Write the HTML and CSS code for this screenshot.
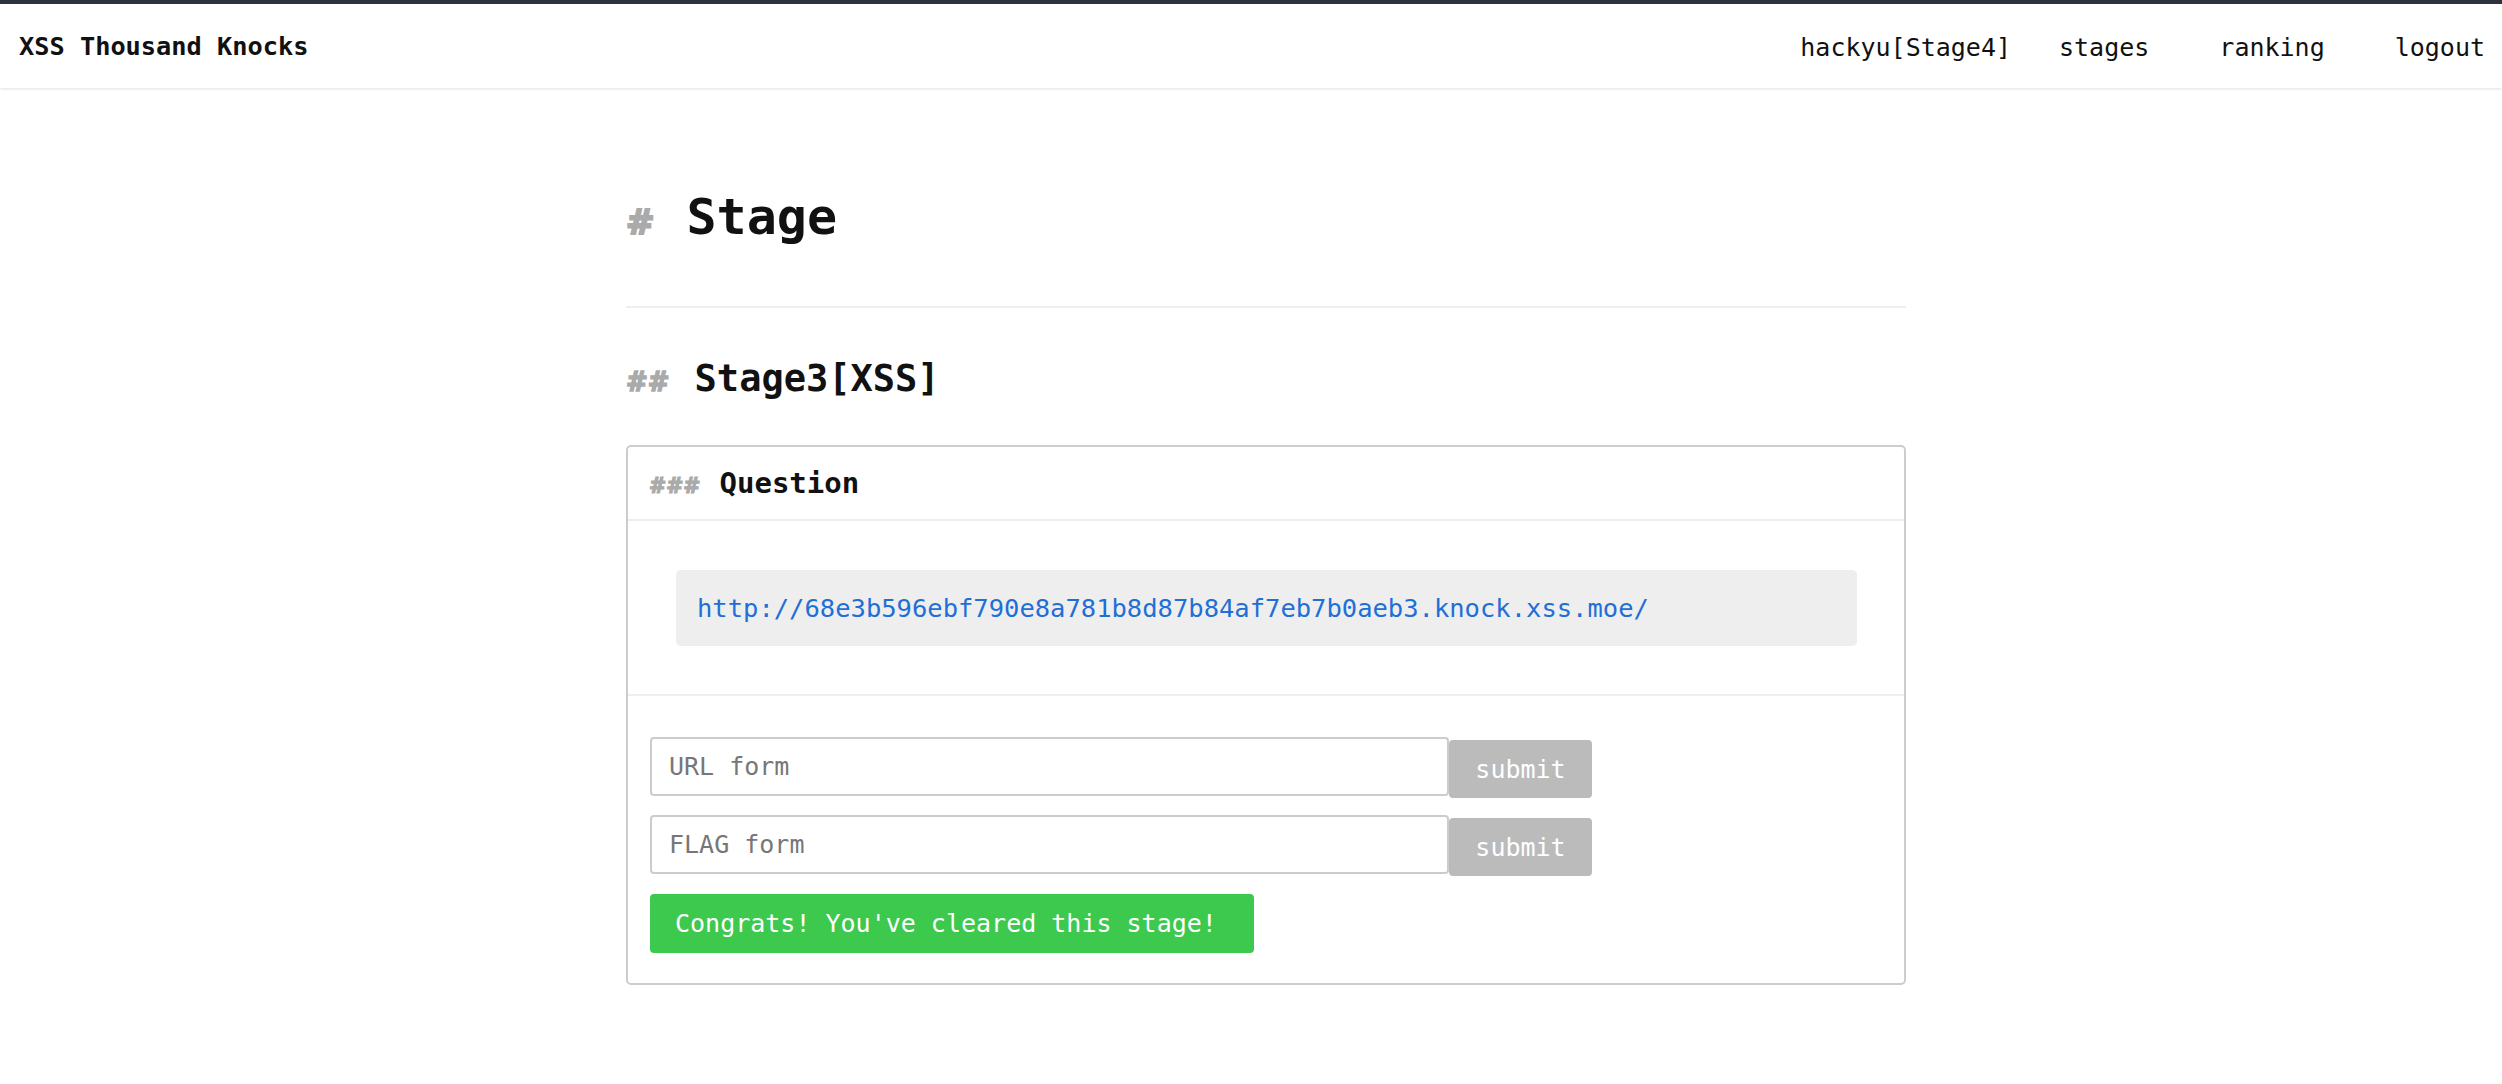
FILE: index.html
```html
<!DOCTYPE html>
<html lang="en">
<head>
<meta charset="utf-8">
<title>XSS Thousand Knocks</title>
<link rel="stylesheet" href="styles.css">
</head>
<body>
<header class="navbar">
  <div class="brand">XSS Thousand Knocks</div>
  <nav class="nav">
    <span class="nav-user">hackyu[Stage4]</span>
    <a class="nav-link" href="#">stages</a>
    <a class="nav-link" href="#">ranking</a>
    <a class="nav-link" href="#">logout</a>
  </nav>
</header>
<main class="container">
  <h1 class="title"><span class="hash hash-1">#</span>Stage</h1>
  <hr class="rule">
  <h2 class="subtitle"><span class="hash hash-2">##</span>Stage3[XSS]</h2>
  <section class="card">
    <div class="card-header">
      <h3 class="card-title"><span class="hash hash-3">###</span>Question</h3>
    </div>
    <div class="card-body question-body">
      <div class="url-box"><a class="url-link" href="#">http://68e3b596ebf790e8a781b8d87b84af7eb7b0aeb3.knock.xss.moe/</a></div>
    </div>
    <div class="card-body form-body">
      <form class="form-row">
        <input class="text-input" type="text" placeholder="URL form">
        <button class="submit-btn" type="button">submit</button>
      </form>
      <form class="form-row">
        <input class="text-input" type="text" placeholder="FLAG form">
        <button class="submit-btn" type="button">submit</button>
      </form>
      <div class="congrats">Congrats! You've cleared this stage!</div>
    </div>
  </section>
</main>
</body>
</html>
```

FILE: styles.css
```css
html, body {
  margin: 0;
  padding: 0;
  background: #fff;
}

body {
  font-family: "DejaVu Sans Mono", "Liberation Mono", monospace;
  color: #111;
}

.navbar {
  display: flex;
  align-items: center;
  justify-content: space-between;
  height: 84px;
  border-top: 4px solid #2c333d;
  padding: 0 17px 0 19px;
  background: #fff;
  box-shadow: 0 1px 3px rgba(0, 0, 0, 0.12);
}

.brand {
  font-weight: 700;
  font-size: 25.3px;
  line-height: 30px;
  color: #111;
  padding-top: 2px;
}

.nav {
  display: flex;
  align-items: center;
  font-size: 25px;
  line-height: 30px;
  padding-top: 3px;
}

.nav-user {
  color: #111;
  margin-right: 48px;
}

.nav-link {
  color: #111;
  text-decoration: none;
}

.nav-link + .nav-link {
  margin-left: 70px;
}

.container {
  width: 1280px;
  margin: 0 auto;
  padding: 99px 0 0 30px;
}

.hash {
  font-family: "DejaVu Sans", sans-serif;
  font-weight: 700;
  color: #aaa;
  line-height: 1;
  -webkit-text-stroke: 1.5px #aaa;
}

.title {
  margin: 0;
  font-size: 50px;
  line-height: 60px;
  font-weight: 700;
}

.hash-1 {
  font-size: 34px;
  margin-right: 32px;
  -webkit-text-stroke: 2px #aaa;
}

.rule {
  margin: 59px 0 0;
  border: 0;
  border-top: 2px solid #eee;
  height: 0;
}

.subtitle {
  margin: 49px 0 0;
  font-size: 37px;
  line-height: 44px;
  font-weight: 700;
}

.hash-2 {
  font-size: 26px;
  margin-right: 25px;
}

.card {
  margin-top: 44px;
  border: 2px solid #cdcdcd;
  border-radius: 5px;
}

.card-header {
  padding: 18px 21px;
  border-bottom: 2px solid #eee;
}

.card-title {
  margin: 0;
  font-size: 29px;
  line-height: 36px;
  font-weight: 700;
}

.hash-3 {
  font-size: 20.5px;
  margin-right: 19px;
  -webkit-text-stroke: 1.2px #aaa;
}

.question-body {
  padding: 49px 47px 48px 48px;
  border-bottom: 2px solid #eee;
}

.url-box {
  background: #eee;
  border-radius: 5px;
  padding: 20px 21px;
  font-size: 25.5px;
  line-height: 36px;
}

.url-link {
  color: #1f6fd6;
  text-decoration: none;
}

.form-body {
  padding: 41px 22px 30px;
}

.form-row {
  display: flex;
  align-items: flex-start;
  margin: 0 0 17px;
}

.form-row + .form-row {
  margin-bottom: 18px;
}

.text-input {
  box-sizing: border-box;
  width: 799px;
  height: 59px;
  margin: 0;
  padding: 0 17px;
  border: 2px solid #cccccc;
  border-radius: 4px;
  font-family: "DejaVu Sans Mono", "Liberation Mono", monospace;
  font-size: 25px;
  color: #333;
  background: #fff;
  outline: none;
}

.text-input::placeholder {
  color: #777;
}

.submit-btn {
  box-sizing: border-box;
  width: 143px;
  height: 58px;
  margin: 3px 0 0;
  padding: 0;
  border: 0;
  border-radius: 4px;
  background: #bbb;
  color: #fff;
  font-family: "DejaVu Sans Mono", "Liberation Mono", monospace;
  font-size: 25px;
}

.congrats {
  box-sizing: border-box;
  width: 604px;
  height: 59px;
  padding-left: 25px;
  border-radius: 4px;
  background: #3cc94d;
  color: #fff;
  font-size: 25px;
  line-height: 59px;
  white-space: nowrap;
}
```
